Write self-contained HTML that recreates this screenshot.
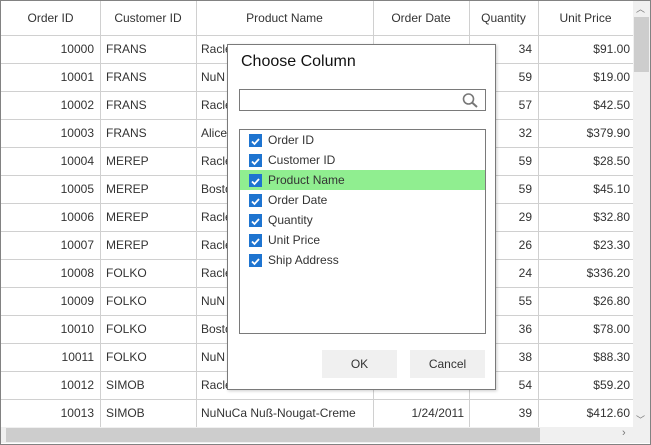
<!DOCTYPE html><html><head><style>
body{margin:0;width:651px;height:445px;overflow:hidden;background:#fff;font-family:"Segoe UI","Liberation Sans",sans-serif;font-size:12px;color:#333}
.a{position:absolute}
.frame{left:0;top:0;width:649px;height:443px;border:1px solid #828282}
.vl{position:absolute;top:1px;width:1px;height:426px;background:#d0d0d0}
.hl{position:absolute;left:1px;width:632px;height:1px;background:#d0d0d0}
.c{position:absolute;white-space:nowrap;line-height:28px}
.r{text-align:right}
.li{position:absolute;left:240px;width:245px;height:20px;line-height:20px}
.cb{position:absolute;left:9px;top:4px;width:13px;height:13px;background:#1e74d0}
.li span{position:absolute;left:28px}
.btn{position:absolute;top:350px;width:75px;height:28px;background:#f0f0f0;text-align:center;line-height:28px;color:#333}
</style></head><body>
<div class="a frame"></div>
<div id="g"></div>
<script>
var cols=[1,100,196,373,469,538,633];
var h='';
cols.slice(1).forEach(function(x){h+='<div class="vl" style="left:'+x+'px"></div>'});
h+='<div class="hl" style="top:35px"></div>';
for(var i=1;i<=14;i++)h+='<div class="hl" style="top:'+(35+i*28)+'px"></div>';
var hd=['Order ID','Customer ID','Product Name','Order Date','Quantity','Unit Price'];
hd.forEach(function(t,i){h+='<div class="c" style="left:'+cols[i]+'px;width:'+(cols[i+1]-cols[i])+'px;text-align:center;top:4px">'+t+'</div>'});
var cu=['FRANS','FRANS','FRANS','FRANS','MEREP','MEREP','MEREP','MEREP','FOLKO','FOLKO','FOLKO','FOLKO','SIMOB','SIMOB'];
var pn=['Racle','NuN','Racle','Alice','Racle','Bosto','Racle','Racle','Racle','NuN','Bosto','NuN','Racle','NuNuCa Nuß-Nougat-Creme'];
var q=[34,59,57,32,59,59,29,26,24,55,36,38,54,39];
var p=['$91.00','$19.00','$42.50','$379.90','$28.50','$45.10','$32.80','$23.30','$336.20','$26.80','$78.00','$88.30','$59.20','$412.60'];
for(var i=0;i<14;i++){var y=35+i*28;
h+='<div class="c r" style="left:1px;width:93px;top:'+y+'px">'+(10000+i)+'</div>';
h+='<div class="c" style="left:106px;top:'+y+'px">'+cu[i]+'</div>';
h+='<div class="c" style="left:201px;top:'+y+'px">'+pn[i]+'</div>';
h+='<div class="c r" style="left:469px;width:63px;top:'+y+'px">'+q[i]+'</div>';
h+='<div class="c r" style="left:538px;width:92px;top:'+y+'px">'+p[i]+'</div>';}
h+='<div class="c r" style="left:373px;width:91px;top:399px">1/24/2011</div>';
document.getElementById('g').innerHTML=h;
</script>
<div class="a" style="left:633px;top:1px;width:17px;height:426px;background:#f0f0f0"></div>
<div class="a" style="left:634px;top:17px;width:15px;height:55px;background:#cdcdcd"></div>
<div class="a" style="left:636px;top:2px;font-size:9px;color:#777">︿</div>
<div class="a" style="left:636px;top:413px;font-size:9px;color:#777">﹀</div>
<div class="a" style="left:1px;top:427px;width:632px;height:16px;background:#f0f0f0"></div>
<div class="a" style="left:6px;top:428px;width:534px;height:14px;background:#cdcdcd"></div>
<div class="a" style="left:622px;top:427px;font-size:11px;color:#777">›</div>
<div class="a" style="left:633px;top:427px;width:17px;height:16px;background:#f0f0f0"></div>
<div class="a" style="left:227px;top:44px;width:267px;height:344px;background:#fff;border:1px solid #7a7a7a;box-shadow:1px 1px 3px rgba(0,0,0,.2)"></div>
<div class="a" style="left:241px;top:53px;font-size:16px;color:#111">Choose Column</div>
<div class="a" style="left:239px;top:89px;width:245px;height:20px;border:1px solid #7a7a7a"></div>
<svg class="a" style="left:461px;top:92px" width="20" height="17"><circle cx="7.5" cy="7" r="5" fill="none" stroke="#777" stroke-width="1.6"/><line x1="11" y1="10.5" x2="16" y2="15" stroke="#777" stroke-width="2"/></svg>
<div class="a" style="left:239px;top:129px;width:245px;height:203px;border:1px solid #7a7a7a"></div>
<div class="a" style="left:240px;top:170px;width:245px;height:20px;background:#90ee90"></div>
<div id="l"></div>
<script>
var it=['Order ID','Customer ID','Product Name','Order Date','Quantity','Unit Price','Ship Address'],s='';
it.forEach(function(t,i){s+='<div class="li" style="top:'+(130+i*20)+'px"><div class="cb"><svg width="13" height="13"><path d="M3 6.5l2.5 2.5 4.5-5" fill="none" stroke="#fff" stroke-width="1.8"/></svg></div><span>'+t+'</span></div>'});
document.getElementById('l').innerHTML=s;
</script>
<div class="btn" style="left:322px">OK</div>
<div class="btn" style="left:410px">Cancel</div>
</body></html>
